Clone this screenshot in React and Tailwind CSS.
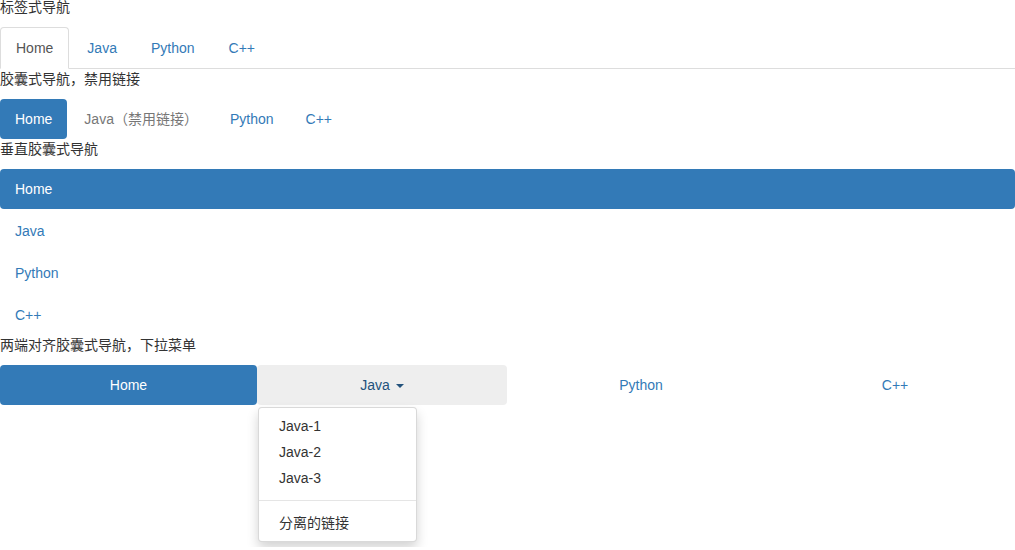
const font = "font-['Liberation_Sans','Noto_Sans_CJK_SC',sans-serif]";

function Tabs() {
    const items = ["Home", "Java", "Python", "C++"];
    return (
        <ul className="mt-[10px] flex border-b border-[#ddd]">
            {items.map((name, i) => (
                <li key={name} className="-mb-px mr-[2px]">
                    <a
                        className={
                            i === 0
                                ? "block px-[15px] py-[10px] border border-[#ddd] border-b-transparent rounded-t-[4px] bg-white text-[#555]"
                                : "block px-[15px] py-[10px] border border-transparent rounded-t-[4px] text-[#337ab7]"
                        }
                    >
                        {name}
                    </a>
                </li>
            ))}
        </ul>
    );
}

function Pills() {
    return (
        <ul className="mt-[10px] flex gap-[2px]">
            <li>
                <a className="block px-[15px] py-[10px] rounded-[4px] bg-[#337ab7] text-white">Home</a>
            </li>
            <li>
                <a className="block px-[15px] py-[10px] rounded-[4px] text-[#777]">Java（禁用链接）</a>
            </li>
            <li>
                <a className="block px-[15px] py-[10px] rounded-[4px] text-[#337ab7]">Python</a>
            </li>
            <li>
                <a className="block px-[15px] py-[10px] rounded-[4px] text-[#337ab7]">C++</a>
            </li>
        </ul>
    );
}

function StackedPills() {
    const items = ["Home", "Java", "Python", "C++"];
    return (
        <ul className="mt-[10px] flex flex-col gap-[2px]">
            {items.map((name, i) => (
                <li key={name}>
                    <a
                        className={
                            i === 0
                                ? "block px-[15px] py-[10px] rounded-[4px] bg-[#337ab7] text-white"
                                : "block px-[15px] py-[10px] rounded-[4px] text-[#337ab7]"
                        }
                    >
                        {name}
                    </a>
                </li>
            ))}
        </ul>
    );
}

function JustifiedPills() {
    return (
        <ul className="mt-[10px] flex">
            <li className="w-[257px]">
                <a className="block py-[10px] text-center rounded-[4px] bg-[#337ab7] text-white">Home</a>
            </li>
            <li className="w-[250px] relative">
                <a className="block py-[10px] text-center rounded-[4px] bg-[#eee] text-[#23527c]">
                    Java
                    <span className="inline-block w-0 h-0 ml-[6px] align-middle border-t-[4px] border-x-[4px] border-x-transparent border-t-[#23527c]"></span>
                </a>
                <div className="absolute left-[1px] top-full mt-[2px] w-[159px] py-[5px] bg-white border border-black/15 rounded-[4px] shadow-[0_6px_12px_rgba(0,0,0,0.175)] z-10">
                    <a className="block px-[20px] py-[3px] text-[#333]">Java-1</a>
                    <a className="block px-[20px] py-[3px] text-[#333]">Java-2</a>
                    <a className="block px-[20px] py-[3px] text-[#333]">Java-3</a>
                    <div className="h-px my-[9px] bg-[#e5e5e5]"></div>
                    <a className="block px-[20px] py-[3px] text-[#333]">分离的链接</a>
                </div>
            </li>
            <li className="w-[268px]">
                <a className="block py-[10px] text-center rounded-[4px] text-[#337ab7]">Python</a>
            </li>
            <li className="flex-1">
                <a className="block py-[10px] text-center rounded-[4px] text-[#337ab7]">C++</a>
            </li>
        </ul>
    );
}

export default function App() {
    return (
        <div className={`${font} text-[14px] leading-[20px] text-[#333] bg-white min-h-[550px]`}>
            <div className="-mt-[3px]">标签式导航</div>
            <Tabs />
            <div>胶囊式导航，禁用链接</div>
            <Pills />
            <div>垂直胶囊式导航</div>
            <StackedPills />
            <div>两端对齐胶囊式导航，下拉菜单</div>
            <JustifiedPills />
        </div>
    );
}
